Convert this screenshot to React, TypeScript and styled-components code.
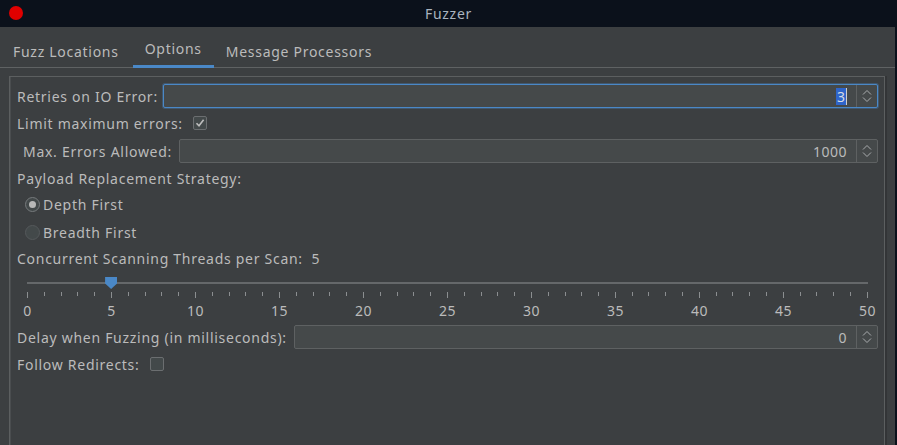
import React from "react";
import styled, { createGlobalStyle } from "styled-components";

const Global = createGlobalStyle`
  html, body { margin: 0; padding: 0; background: #0b111b; overflow: hidden; }
  body { font-family: "Noto Sans", "DejaVu Sans", sans-serif; font-size: 14px; letter-spacing: 0.72px; color: #bbbbbb; }
  * { box-sizing: border-box; }
`;

const Screen = styled.div`
  width: 897px;
  height: 445px;
  display: flex;
  flex-direction: column;
  background: #0b111b;
  overflow: hidden;
`;

const TitleBar = styled.div`
  height: 27px;
  flex: none;
  display: flex;
  align-items: center;
  justify-content: center;
  position: relative;
  color: #aab4bf;
  font-size: 14px;
`;

const CloseDot = styled.span`
  position: absolute;
  left: 9px;
  top: 6px;
  width: 14px;
  height: 14px;
  border-radius: 50%;
  background: #e00000;
`;

const Body = styled.div`
  flex: 1;
  width: 895px;
  background: #3c3f41;
  display: flex;
  flex-direction: column;
  overflow: hidden;
`;

const TabBar = styled.div`
  height: 41px;
  flex: none;
  display: flex;
  padding-left: 1px;
  border-bottom: 1px solid #5f6263;
`;

const Tab = styled.div<{ $active?: boolean }>`
  height: ${(p) => (p.$active ? "41px" : "40px")};
  padding: 8px 12px 0 12px;
  display: flex;
  align-items: center;
  color: #bbbbbb;
  border-bottom: ${(p) => (p.$active ? "3px solid #4a88c7" : "none")};
  margin-bottom: ${(p) => (p.$active ? "-1px" : "0")};
  padding-bottom: ${(p) => (p.$active ? "3px" : "0")};
  &:first-child {
    padding-right: 14px;
  }
`;

const Panel = styled.div`
  margin: 8px 10px 0 9px;
  height: 400px;
  flex: none;
  border: 1px solid #5c5f60;
  box-shadow: 1px 0 0 #333537, 2px 0 0 #333537, inset 1px 0 0 #4a4d4f;
  padding: 6px 6px 0 7px;
  display: flex;
  flex-direction: column;
`;

const Row = styled.div<{ $h: number; $indent?: number }>`
  height: ${(p) => p.$h}px;
  display: flex;
  align-items: center;
  padding-left: ${(p) => p.$indent ?? 0}px;
  white-space: nowrap;
`;

const Label = styled.span<{ $gap?: number }>`
  color: #bbbbbb;
  margin-right: ${(p) => p.$gap ?? 5}px;
`;

const Spinner = styled.div<{ $focused?: boolean }>`
  flex: 1;
  height: 24px;
  display: flex;
  background: #45494a;
  border: 1px solid ${(p) => (p.$focused ? "#4a88c7" : "#5e6162")};
  border-radius: 2px;
  box-shadow: ${(p) => (p.$focused ? "0 0 0 1px rgba(74,136,199,0.35)" : "none")};
`;

const SpinValue = styled.div`
  flex: 1;
  display: flex;
  align-items: center;
  justify-content: flex-end;
  padding-right: 9px;
  color: #bbbbbb;
  letter-spacing: 0.5px;
`;

const Selected = styled.span`
  background: #2f65ca;
  color: #d6dce4;
  padding: 0 1px;
  line-height: 17px;
  letter-spacing: 0;
`;

const Caret = styled.span`
  width: 1px;
  height: 17px;
  background: #cfcfcf;
`;

const SpinButtons = styled.div`
  width: 21px;
  border-left: 1px solid #5e6162;
  display: flex;
  align-items: center;
  justify-content: center;
`;

const CheckBox = styled.span`
  width: 14px;
  height: 14px;
  border: 1px solid #6b6e70;
  border-radius: 2px;
  background: #43494a;
  display: inline-flex;
  align-items: center;
  justify-content: center;
  margin-left: 5px;
`;

const RadioRow = styled(Row)`
  padding-left: 8px;
`;

const RadioDot = styled.span<{ $on?: boolean }>`
  width: 15px;
  height: 15px;
  border-radius: 50%;
  border: 1px solid ${(p) => (p.$on ? "#767a7c" : "#55595b")};
  background: #43494a;
  display: inline-flex;
  align-items: center;
  justify-content: center;
  margin-right: 3px;
  &::after {
    content: "";
    display: ${(p) => (p.$on ? "block" : "none")};
    width: 7px;
    height: 7px;
    border-radius: 50%;
    background: #b8b8b8;
  }
`;

const SliderBox = styled.div`
  height: 54px;
  margin: 0 10px;
  position: relative;
  display: flex;
  flex-direction: column;
`;

const Track = styled.div`
  margin-top: 12px;
  height: 2px;
  background: #65686a;
`;

const Thumb = styled.span`
  position: absolute;
  top: 7px;
  width: 12px;
  height: 12px;
  margin-left: -6px;
  background: #4a88c7;
  clip-path: polygon(0 0, 100% 0, 100% 55%, 50% 100%, 0 55%);
`;

const Ticks = styled.div`
  margin-top: 8px;
  height: 6px;
  display: flex;
  justify-content: space-between;
  align-items: flex-start;
`;

const Tick = styled.span<{ $major?: boolean }>`
  width: 1px;
  height: ${(p) => (p.$major ? 6 : 4)}px;
  background: #8b8e90;
`;

const TickLabels = styled.div`
  margin-top: 3px;
  display: flex;
  justify-content: space-between;
  height: 18px;
  align-items: center;
  letter-spacing: 0.5px;
`;

const TickLabel = styled.span`
  width: 1px;
  display: flex;
  justify-content: center;
  white-space: nowrap;
  color: #bbbbbb;
`;

const Chevrons = () => (
  <svg width="10" height="16" viewBox="0 0 10 16" fill="none" stroke="#a9acae" strokeWidth="1">
    <path d="M1 6.5 L5 2.5 L9 6.5" />
    <path d="M1 9.5 L5 13.5 L9 9.5" />
  </svg>
);

const Check = () => (
  <svg width="10" height="10" viewBox="0 0 10 10" fill="none" stroke="#bdbdbd" strokeWidth="1.6">
    <path d="M1.5 5.2 L4 7.8 L8.6 1.8" />
  </svg>
);

export default function App() {
  const ticks = Array.from({ length: 51 }, (_, i) => i);
  const labels = Array.from({ length: 11 }, (_, i) => i * 5);
  const value = 5;
  return (
    <>
      <Global />
      <Screen>
        <TitleBar>
          <CloseDot />
          Fuzzer
        </TitleBar>
        <Body>
          <TabBar>
            <Tab>Fuzz Locations</Tab>
            <Tab $active>Options</Tab>
            <Tab>Message Processors</Tab>
          </TabBar>
          <Panel>
            <Row $h={26}>
              <Label>Retries on IO Error:</Label>
              <Spinner $focused>
                <SpinValue>
                  <Selected>3</Selected>
                  <Caret />
                </SpinValue>
                <SpinButtons>
                  <Chevrons />
                </SpinButtons>
              </Spinner>
            </Row>
            <Row $h={28}>
              <Label>Limit maximum errors:</Label>
              <CheckBox>
                <Check />
              </CheckBox>
            </Row>
            <Row $h={28} $indent={6}>
              <Label $gap={7}>Max. Errors Allowed:</Label>
              <Spinner>
                <SpinValue>1000</SpinValue>
                <SpinButtons>
                  <Chevrons />
                </SpinButtons>
              </Spinner>
            </Row>
            <Row $h={26}>
              <Label>Payload Replacement Strategy:</Label>
            </Row>
            <RadioRow $h={27}>
              <RadioDot $on />
              Depth First
            </RadioRow>
            <RadioRow $h={28}>
              <RadioDot />
              Breadth First
            </RadioRow>
            <Row $h={24}>
              <Label>Concurrent Scanning Threads per Scan:&nbsp; 5</Label>
            </Row>
            <SliderBox>
              <Track />
              <Thumb style={{ left: `${(value / 50) * 100}%` }} />
              <Ticks>
                {ticks.map((t) => (
                  <Tick key={t} $major={t % 5 === 0} />
                ))}
              </Ticks>
              <TickLabels>
                {labels.map((l) => (
                  <TickLabel key={l}>{l}</TickLabel>
                ))}
              </TickLabels>
            </SliderBox>
            <Row $h={26}>
              <Label $gap={7}>Delay when Fuzzing (in milliseconds):</Label>
              <Spinner>
                <SpinValue>0</SpinValue>
                <SpinButtons>
                  <Chevrons />
                </SpinButtons>
              </Spinner>
            </Row>
            <Row $h={28}>
              <Label>Follow Redirects:</Label>
              <CheckBox />
            </Row>
          </Panel>
        </Body>
      </Screen>
    </>
  );
}
